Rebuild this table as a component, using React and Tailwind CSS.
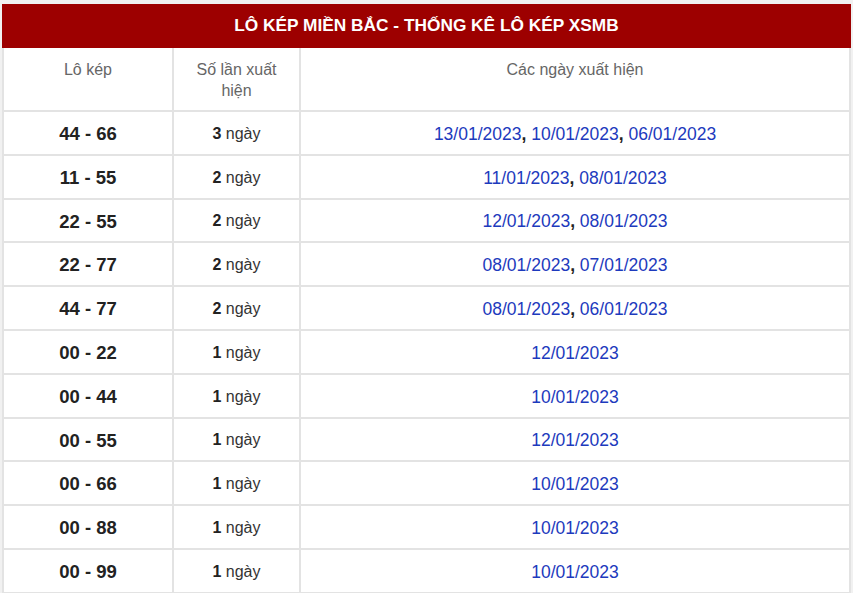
const rows = [
  { pair: "44 - 66", count: 3, dates: ["13/01/2023", "10/01/2023", "06/01/2023"] },
  { pair: "11 - 55", count: 2, dates: ["11/01/2023", "08/01/2023"] },
  { pair: "22 - 55", count: 2, dates: ["12/01/2023", "08/01/2023"] },
  { pair: "22 - 77", count: 2, dates: ["08/01/2023", "07/01/2023"] },
  { pair: "44 - 77", count: 2, dates: ["08/01/2023", "06/01/2023"] },
  { pair: "00 - 22", count: 1, dates: ["12/01/2023"] },
  { pair: "00 - 44", count: 1, dates: ["10/01/2023"] },
  { pair: "00 - 55", count: 1, dates: ["12/01/2023"] },
  { pair: "00 - 66", count: 1, dates: ["10/01/2023"] },
  { pair: "00 - 88", count: 1, dates: ["10/01/2023"] },
  { pair: "00 - 99", count: 1, dates: ["10/01/2023"] },
];

export default function App() {
  return (
    <div className="min-h-[593px] bg-[#f1f1f1] px-[2px] pt-[4px] font-['Liberation_Sans',Arial,sans-serif]">
      <div className="bg-white">
        <div className="flex h-[44px] items-center justify-center bg-[#9d0000] text-[17.3px] font-bold text-white">
          LÔ KÉP MIỀN BẮC - THỐNG KÊ LÔ KÉP XSMB
        </div>
        <table className="w-full border-collapse text-center">
          <colgroup>
            <col className="w-[170px]" />
            <col className="w-[127px]" />
            <col />
          </colgroup>
          <thead>
            <tr className="h-[63px]">
              <th className="border-2 border-t-0 border-[#e3e3e3] px-2 pt-[11px] align-top text-[16px] font-normal leading-[21px] text-[#666]">
                Lô kép
              </th>
              <th className="border-2 border-t-0 border-[#e3e3e3] px-4 pt-[11px] align-top text-[16px] font-normal leading-[21px] text-[#666]">
                Số lần xuất hiện
              </th>
              <th className="border-2 border-t-0 border-[#e3e3e3] px-2 pt-[11px] align-top text-[16px] font-normal leading-[21px] text-[#666]">
                Các ngày xuất hiện
              </th>
            </tr>
          </thead>
          <tbody>
            {rows.map((r) => (
              <tr key={r.pair} className="h-[43.8px]">
                <td className="border-2 border-[#e3e3e3] pt-[2px] text-[18.5px] font-bold text-[#222]">
                  {r.pair}
                </td>
                <td className="border-2 border-[#e3e3e3] pt-[2px] text-[16px] text-[#333]">
                  <b className="text-[#222]">{r.count}</b> ngày
                </td>
                <td className="border-2 border-[#e3e3e3] pt-[2px] text-[17.5px] text-[#1d3abd]">
                  {r.dates.map((d, i) => (
                    <span key={i}>
                      {i > 0 && <b className="text-[#222]">, </b>}
                      {d}
                    </span>
                  ))}
                </td>
              </tr>
            ))}
          </tbody>
        </table>
      </div>
    </div>
  );
}
